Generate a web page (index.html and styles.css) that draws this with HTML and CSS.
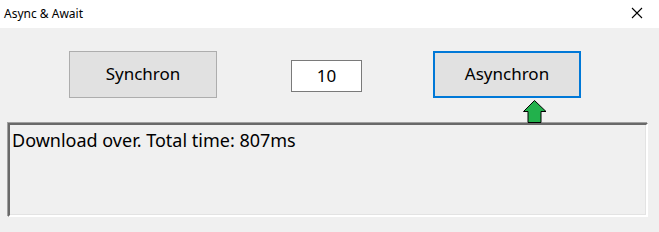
FILE: index.html
```html
<!DOCTYPE html>
<html lang="en">
   <head>
      <meta charset="UTF-8" />
      <title>Async &amp; Await</title>
      <link rel="stylesheet" href="styles.css">
   </head>
   <body>
      <div class="titlebar">
         <div class="title">Async &amp; Await</div>
         <div class="close">
            <svg width="12" height="12" viewBox="0 0 12 12">
               <path d="M1 1 L11 11 M11 1 L1 11" stroke="#000" stroke-width="1.1" fill="none"/>
            </svg>
         </div>
      </div>
      <div class="window">
         <div class="controls">
            <button class="button" id="sync-button">Synchron</button>
            <div class="number-box">10</div>
            <button class="button focused" id="async-button">Asynchron</button>
         </div>
         <div class="arrow-row">
            <svg width="24" height="23" viewBox="0 0 24 23">
               <path d="M11.5 0.5 L23 11.5 L18 11.5 L18 22.5 L5 22.5 L5 11.5 L0.5 11.5 Z" fill="#22b14c" stroke="#000" stroke-width="1"/>
            </svg>
         </div>
         <div class="output">Download over. Total time: 807ms</div>
      </div>
   </body>
</html>
```
FILE: styles.css
```css
body {
background-color: #f0f0f0;
color: #000;
font-family: "Noto Sans", "Open Sans", sans-serif;
margin: 0;
padding: 0;
overflow: hidden;
}
.titlebar {
background-color: #fff;
height: 28px;
display: flex;
justify-content: space-between;
align-items: center;
}
.title {
font-size: 12px;
padding-left: 4px;
padding-bottom: 2px;
}
.close {
width: 28px;
display: flex;
justify-content: center;
padding-right: 8px;
padding-bottom: 2px;
}
.window {
padding-top: 23px;
}
.controls {
display: flex;
align-items: flex-start;
padding-left: 69px;
height: 47px;
}
.button {
width: 148px;
height: 47px;
background-color: #e1e1e1;
border: 1px solid #adadad;
font-family: inherit;
font-size: 17px;
color: #000;
padding: 0 0 2px 0;
margin: 0;
}
.button.focused {
border: 2px solid #0078d7;
}
#sync-button {
margin-right: 74px;
}
.number-box {
width: 71px;
height: 32px;
box-sizing: border-box;
margin-top: 9px;
margin-right: 71px;
background-color: #fff;
border: 1px solid #7a7a7a;
font-size: 17px;
display: flex;
justify-content: center;
align-items: center;
padding-bottom: 1px;
}
.arrow-row {
display: flex;
padding-left: 523px;
padding-top: 2px;
height: 23px;
}
.output {
margin: 0 11px 0 8px;
height: 94px;
box-sizing: border-box;
border-style: solid;
border-width: 2px;
border-color: #696969 #fff #fff #696969;
box-shadow: inset -1px -1px 0 #e3e3e3, -1px -1px 0 #a0a0a0;
font-size: 18px;
padding: 4px 0 0 2px;
line-height: 22px;
}
```
